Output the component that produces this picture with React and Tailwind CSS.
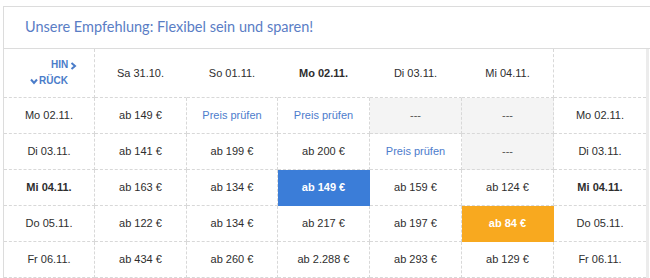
const HEAD = ['Sa 31.10.', 'So 01.11.', 'Mo 02.11.', 'Di 03.11.', 'Mi 04.11.'];

// cell kinds: p = price, c = "Preis prüfen", n = not available, b = best (blue), o = cheapest (orange)
const ROWS = [
  { day: 'Mo 02.11.', cells: [['p', 'ab 149 €'], ['c'], ['c'], ['n'], ['n']] },
  { day: 'Di 03.11.', cells: [['p', 'ab 141 €'], ['p', 'ab 199 €'], ['p', 'ab 200 €'], ['c'], ['n']] },
  { day: 'Mi 04.11.', bold: true, cells: [['p', 'ab 163 €'], ['p', 'ab 134 €'], ['b', 'ab 149 €'], ['p', 'ab 159 €'], ['p', 'ab 124 €']] },
  { day: 'Do 05.11.', cells: [['p', 'ab 122 €'], ['p', 'ab 134 €'], ['p', 'ab 217 €'], ['p', 'ab 197 €'], ['o', 'ab 84 €']] },
  { day: 'Fr 06.11.', cells: [['p', 'ab 434 €'], ['p', 'ab 260 €'], ['p', 'ab 2.288 €'], ['p', 'ab 293 €'], ['p', 'ab 129 €']] },
];

const cellBase = 'h-9 flex items-center justify-center border-b border-dashed';

function Cell({ kind, text }) {
  if (kind === 'b') {
    return <div className={`${cellBase} border-r border-transparent bg-[#3b7dd8] text-white font-bold`}>{text}</div>;
  }
  if (kind === 'o') {
    return <div className={`${cellBase} border-r border-transparent bg-[#f8a91f] text-white font-bold`}>{text}</div>;
  }
  if (kind === 'n') {
    return <div className={`${cellBase} border-r border-[#d8d8d8] bg-[#f4f4f4] text-[#555]`}>---</div>;
  }
  if (kind === 'c') {
    return <div className={`${cellBase} border-r border-[#d8d8d8] text-[#4d7ccc]`}>Preis prüfen</div>;
  }
  return <div className={`${cellBase} border-r border-[#d8d8d8]`}>{text}</div>;
}

export default function App() {
  return (
    <div className="w-[650px] h-[278px] bg-white overflow-hidden pt-[6px] pl-[3px]">
      <div className="w-[647px] border-t border-l border-[#dcdcdc]">
        <div className="h-[42px] border-b border-[#dcdcdc] flex items-center pl-[21px] pb-[1px] text-[14.5px] font-normal text-[#5a7dc5] font-['Lato','Open_Sans',sans-serif]">
          Unsere Empfehlung: Flexibel sein und sparen!
        </div>
        <div className="flex">
          <div className="grid grid-cols-[91px_92px_91px_92px_92px_92px_92px] text-[11px] text-[#2e2e2e] font-['Liberation_Sans',Arial,sans-serif]">
            <div className="h-[49px] border-b border-r border-dashed border-[#d8d8d8] flex flex-col justify-center text-[10px] font-bold text-[#4a7cc9] leading-4">
              <div className="pl-[47px] flex items-center gap-[2px]">
                HIN
                <svg width="7" height="8" viewBox="0 0 7 8" className="mt-[1px]">
                  <polyline points="1.5,1 5,4 1.5,7" fill="none" stroke="#4a7cc9" strokeWidth="2" />
                </svg>
              </div>
              <div className="pl-[26px] flex items-center gap-[1px]">
                <svg width="8" height="7" viewBox="0 0 8 7">
                  <polyline points="1,1.5 4,5 7,1.5" fill="none" stroke="#4a7cc9" strokeWidth="2" />
                </svg>
                RÜCK
              </div>
            </div>
            {HEAD.map((h, i) => (
              <div
                key={h}
                className={`h-[49px] flex items-center justify-center border-b border-r border-dashed border-b-[#d8d8d8] ${i === 4 ? 'border-r-[#d8d8d8]' : 'border-r-transparent'} ${i === 2 ? 'font-bold' : ''}`}
              >
                {h}
              </div>
            ))}
            <div className="h-[49px] border-b border-dashed border-[#d8d8d8]" />
            {ROWS.map((r) => (
              <div key={r.day} className="contents">
                <div className={`${cellBase} border-r border-[#d8d8d8] ${r.bold ? 'font-bold' : ''}`}>{r.day}</div>
                {r.cells.map(([k, t], j) => (
                  <Cell key={j} kind={k} text={t} />
                ))}
                <div className={`${cellBase} border-[#d8d8d8] ${r.bold ? 'font-bold' : ''}`}>{r.day}</div>
              </div>
            ))}
          </div>
          <div className="w-[3px] bg-[#ececec]" />
        </div>
      </div>
    </div>
  );
}
